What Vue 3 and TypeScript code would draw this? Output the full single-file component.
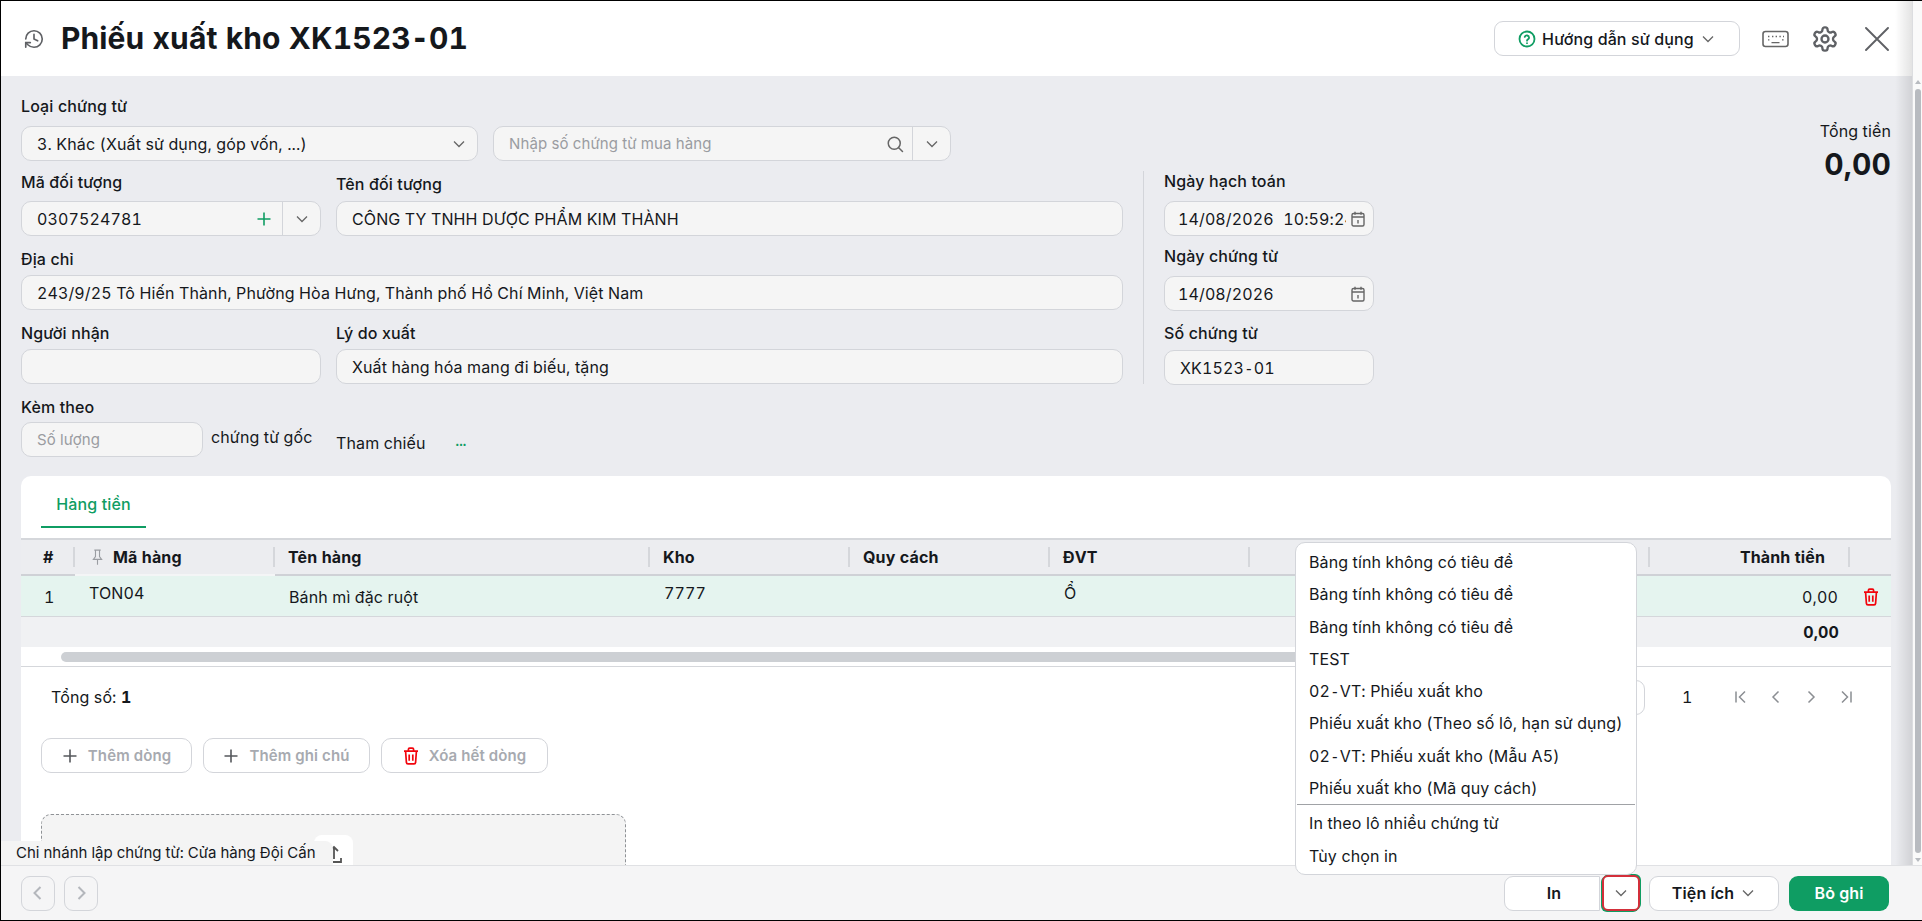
<script setup lang="ts">
interface Column {
  title: string
  align?: 'right'
}

const columns: Column[] = [
  { title: '#' },
  { title: 'Mã hàng' },
  { title: 'Tên hàng' },
  { title: 'Kho' },
  { title: 'Quy cách' },
  { title: 'ĐVT' },
  { title: '' },
  { title: 'Thành tiền', align: 'right' },
  { title: '' },
]

const printTemplates = [
  'Bảng tính không có tiêu đề',
  'Bảng tính không có tiêu đề',
  'Bảng tính không có tiêu đề',
  'TEST',
  '02-VT: Phiếu xuất kho',
  'Phiếu xuất kho (Theo số lô, hạn sử dụng)',
  '02-VT: Phiếu xuất kho (Mẫu A5)',
  'Phiếu xuất kho (Mã quy cách)',
]
const printOptions = ['In theo lô nhiều chứng từ', 'Tùy chọn in']
</script>

<template>
  <div class="window">
    <div class="top">
      <div class="pane">
        <header class="head">
          <svg class="history" viewBox="0 0 24 24" fill="none" stroke="currentColor" stroke-width="2" stroke-linecap="round" stroke-linejoin="round">
            <path d="M3 12a9 9 0 1 1 9 9 9.75 9.75 0 0 1-6.74-2.74L3 16" />
            <path d="M3 21v-5h5" />
            <path d="M12 7v5l4 2" />
          </svg>
          <h1>Phiếu xuất kho XK1523<span class="hy">-</span>01</h1>
          <button class="guide">
            <svg class="guide-q" viewBox="0 0 24 24" fill="none" stroke="#0f9d63" stroke-width="2.4" stroke-linecap="round">
              <circle cx="12" cy="12" r="10" />
              <path d="M9 9.2a3 3 0 0 1 5.8 1c0 2-2.8 2.4-2.8 4" />
              <path d="M12 17.6h.01" />
            </svg>
            Hướng dẫn sử dụng
            <svg class="chev" viewBox="0 0 16 16"><path d="M3 5.5l5 5 5-5" /></svg>
          </button>
          <svg class="keyboard" viewBox="0 0 27 18" fill="none" stroke="#666" stroke-width="1.6">
            <rect x="1" y="1.5" width="25" height="15" rx="2.5" />
            <path d="M6 6.5h1.4M10 6.5h1.4M13.6 6.5H15M17.4 6.5h1.4M21 6.5h1M6 9.8h1.4M20 9.8h1.6M9.5 12.6h8" stroke-width="1.3" />
          </svg>
          <svg class="gear" viewBox="0 0 24 24" fill="none" stroke="#5f6165" stroke-width="2" stroke-linejoin="round">
            <path d="M12.22 2h-.44a2 2 0 0 0-2 2v.18a2 2 0 0 1-1 1.73l-.43.25a2 2 0 0 1-2 0l-.15-.08a2 2 0 0 0-2.73.73l-.22.38a2 2 0 0 0 .73 2.73l.15.1a2 2 0 0 1 1 1.72v.51a2 2 0 0 1-1 1.74l-.15.09a2 2 0 0 0-.73 2.73l.22.38a2 2 0 0 0 2.73.73l.15-.08a2 2 0 0 1 2 0l.43.25a2 2 0 0 1 1 1.73V20a2 2 0 0 0 2 2h.44a2 2 0 0 0 2-2v-.18a2 2 0 0 1 1-1.73l.43-.25a2 2 0 0 1 2 0l.15.08a2 2 0 0 0 2.73-.73l.22-.39a2 2 0 0 0-.73-2.73l-.15-.08a2 2 0 0 1-1-1.74v-.5a2 2 0 0 1 1-1.74l.15-.09a2 2 0 0 0 .73-2.73l-.22-.38a2 2 0 0 0-2.73-.73l-.15.08a2 2 0 0 1-2 0l-.43-.25a2 2 0 0 1-1-1.73V4a2 2 0 0 0-2-2z" />
            <circle cx="12" cy="12" r="3" />
          </svg>
          <svg class="close" viewBox="0 0 24 24" fill="none" stroke="#5f6165" stroke-width="1.9" stroke-linecap="round">
            <path d="M1 1l22 22M23 1L1 23" />
          </svg>
        </header>

        <div class="body">
          <section class="form">
            <div class="form-main">
              <label class="lbl">Loại chứng từ</label>
              <div class="row row-first">
                <div class="inp w-type">
                  <span class="val">3. Khác (Xuất sử dụng, góp vốn, ...)</span>
                  <svg class="chev" viewBox="0 0 16 16"><path d="M3 5.5l5 5 5-5" /></svg>
                </div>
                <div class="inp w-purchase">
                  <span class="val ph">Nhập số chứng từ mua hàng</span>
                  <svg class="search" viewBox="0 0 24 24" fill="none" stroke="#666" stroke-width="2" stroke-linecap="round">
                    <circle cx="11" cy="11" r="8" />
                    <path d="M17 17l5 5" />
                  </svg>
                  <span class="addon"><svg class="chev" viewBox="0 0 16 16"><path d="M3 5.5l5 5 5-5" /></svg></span>
                </div>
              </div>

              <div class="row row-code">
                <div class="col-code">
                  <label class="lbl">Mã đối tượng</label>
                  <div class="inp mt-9">
                    <span class="val">0307524781</span>
                    <svg class="plus" viewBox="0 0 16 16"><path d="M8 1.5v13M1.5 8h13" /></svg>
                    <span class="addon"><svg class="chev" viewBox="0 0 16 16"><path d="M3 5.5l5 5 5-5" /></svg></span>
                  </div>
                </div>
                <div class="col-name">
                  <label class="lbl lbl-low">Tên đối tượng</label>
                  <div class="inp mt-9"><span class="val">CÔNG TY TNHH DƯỢC PHẨM KIM THÀNH</span></div>
                </div>
              </div>

              <label class="lbl mt-13">Địa chỉ</label>
              <div class="inp mt-6"><span class="val">243/9/25 Tô Hiến Thành, Phường Hòa Hưng, Thành phố Hồ Chí Minh, Việt Nam</span></div>

              <div class="row mt-13">
                <div class="col-code">
                  <label class="lbl">Người nhận</label>
                  <div class="inp mt-6"></div>
                </div>
                <div class="col-name">
                  <label class="lbl">Lý do xuất</label>
                  <div class="inp mt-6"><span class="val">Xuất hàng hóa mang đi biếu, tặng</span></div>
                </div>
              </div>

              <label class="lbl mt-13">Kèm theo</label>
              <div class="row attach">
                <div class="inp w-count"><span class="val ph">Số lượng</span></div>
                <span class="attach-text">chứng từ gốc</span>
                <span class="refs">Tham chiếu</span>
                <span class="dots">...</span>
              </div>
            </div>

            <div class="form-dates">
              <label class="lbl">Ngày hạch toán</label>
              <div class="inp date mt-10">
                <span class="val clip">14/08/2026 10:59:24</span>
                <svg class="cal" viewBox="0 0 14 16" fill="none" stroke="#666" stroke-width="1.4">
                  <rect x="1" y="2.5" width="12" height="12.5" rx="1.5" />
                  <path d="M1 6h12M4 .8v3M10 .8v3M7 9v3.5" />
                </svg>
              </div>
              <label class="lbl mt-10">Ngày chứng từ</label>
              <div class="inp date mt-10">
                <span class="val clip">14/08/2026</span>
                <svg class="cal" viewBox="0 0 14 16" fill="none" stroke="#666" stroke-width="1.4">
                  <rect x="1" y="2.5" width="12" height="12.5" rx="1.5" />
                  <path d="M1 6h12M4 .8v3M10 .8v3M7 9v3.5" />
                </svg>
              </div>
              <label class="lbl mt-12">Số chứng từ</label>
              <div class="inp date doc-no mt-7"><span class="val">XK1523<span class="hy">-</span>01</span></div>
            </div>

            <div class="form-total">
              <div class="total-label">Tổng tiền</div>
              <div class="total-value">0,00</div>
            </div>
          </section>

          <section class="card">
            <div class="tabs"><span class="tab">Hàng tiền</span></div>

            <div class="thead">
              <div v-for="(c, i) in columns" :key="i" class="th" :class="{ 'th-right': c.align === 'right', 'th-sticky': i === 1, 'th-num': i === 0 }">
                <svg v-if="i === 1" class="pin" viewBox="0 0 12 18" fill="none" stroke="#9a9da2" stroke-width="1.2">
                  <path d="M2.5 1h7M3.8 1v7L1.5 11h9L8.2 8V1M6 11v6" />
                </svg>
                <span class="th-text">{{ c.title }}</span>
                <span v-if="i < 8" class="sep"></span>
              </div>
            </div>

            <div class="trow">
              <div class="td td-num">1</div>
              <div class="td td-raise">TON04</div>
              <div class="td">Bánh mì đặc ruột</div>
              <div class="td td-raise">7777</div>
              <div class="td"></div>
              <div class="td td-raise">Ổ</div>
              <div class="td"></div>
              <div class="td td-right">0,00</div>
              <div class="td td-del">
                <svg class="trash" viewBox="0 0 16 18" fill="none" stroke="#f2050d" stroke-width="1.7">
                  <path d="M1 4.2h14M5.4 4V2.4a1.2 1.2 0 0 1 1.2-1.2h2.8a1.2 1.2 0 0 1 1.2 1.2V4" />
                  <path d="M2.6 4.4l.8 11a1.6 1.6 0 0 0 1.6 1.5h6a1.6 1.6 0 0 0 1.6-1.5l.8-11M6.2 7.4v6.4M9.8 7.4v6.4" />
                </svg>
              </div>
            </div>

            <div class="tsum">
              <div class="sum-value">0,00</div>
            </div>

            <div class="hscroll"><div class="hthumb"></div></div>

            <div class="pager">
              <span class="count">Tổng số: <b>1</b></span>
              <span class="page-size"></span>
              <span class="page-no">1</span>
              <svg class="pg" viewBox="0 0 16 16"><path d="M3 2.5v11M12 2.5L6.5 8l5.5 5.5" /></svg>
              <svg class="pg" viewBox="0 0 16 16"><path d="M10.5 2.5L5 8l5.5 5.5" /></svg>
              <svg class="pg" viewBox="0 0 16 16"><path d="M5.5 2.5L11 8l-5.5 5.5" /></svg>
              <svg class="pg" viewBox="0 0 16 16"><path d="M13 2.5v11M4 2.5L9.5 8 4 13.5" /></svg>
            </div>

            <div class="row-actions">
              <button class="ghost w-a"><svg class="add" viewBox="0 0 16 16"><path d="M8 1.5v13M1.5 8h13" /></svg>Thêm dòng</button>
              <button class="ghost w-b"><svg class="add" viewBox="0 0 16 16"><path d="M8 1.5v13M1.5 8h13" /></svg>Thêm ghi chú</button>
              <button class="ghost w-c">
                <svg class="trash" viewBox="0 0 16 18" fill="none" stroke="#f2050d" stroke-width="1.7">
                  <path d="M1 4.2h14M5.4 4V2.4a1.2 1.2 0 0 1 1.2-1.2h2.8a1.2 1.2 0 0 1 1.2 1.2V4" />
                  <path d="M2.6 4.4l.8 11a1.6 1.6 0 0 0 1.6 1.5h6a1.6 1.6 0 0 0 1.6-1.5l.8-11M6.2 7.4v6.4M9.8 7.4v6.4" />
                </svg>
                Xóa hết dòng
              </button>
            </div>

            <div class="drop">
              <button class="upload">
                <svg viewBox="0 0 20 20" fill="none" stroke="#555" stroke-width="1.8">
                  <path d="M10 15V3M6 7l4-4 4 4M3 14v4h14v-4" />
                </svg>
              </button>
            </div>
          </section>
        </div>
      </div>

      <aside class="vscroll">
        <span class="arrow-up"></span>
        <span class="vthumb"></span>
        <span class="arrow-down"></span>
      </aside>
    </div>

    <footer class="foot">
      <button class="nav"><svg class="nav-ic" viewBox="0 0 16 16"><path d="M10.5 2L4.5 8l6 6" /></svg></button>
      <button class="nav"><svg class="nav-ic" viewBox="0 0 16 16"><path d="M5.5 2l6 6-6 6" /></svg></button>
      <span class="foot-gap"></span>
      <button class="btn btn-in">In</button>
      <button class="btn btn-caret"><svg class="chev" viewBox="0 0 16 16"><path d="M3 5.5l5 5 5-5" /></svg></button>
      <button class="btn btn-util">Tiện ích <svg class="chev" viewBox="0 0 16 16"><path d="M3 5.5l5 5 5-5" /></svg></button>
      <button class="btn btn-save">Bỏ ghi</button>
    </footer>

    <div class="branch">Chi nhánh lập chứng từ: Cửa hàng Đội Cấn</div>

    <div class="menu">
      <div v-for="(t, i) in printTemplates" :key="i" class="menu-item">
        <template v-for="(part, j) in t.split('-')" :key="j"><span v-if="j" class="hy">-</span>{{ part }}</template>
      </div>
      <div class="menu-line"></div>
      <div v-for="t in printOptions" :key="t" class="menu-item">{{ t }}</div>
    </div>
  </div>
</template>

<style scoped>
.window {
  position: relative;
  box-sizing: border-box;
  width: 1922px;
  height: 921px;
  display: flex;
  flex-direction: column;
  overflow: hidden;
  border-top: 1px solid #000;
  border-left: 1px solid #000;
  border-bottom: 1px solid #000;
  background: #fff;
  color: #15181c;
  font-family: Inter, "Noto Sans", sans-serif;
  font-size: 16px;
  letter-spacing: 0.12px;
  font-variant-numeric: tabular-nums;
}
button {
  font-family: inherit;
  font-size: 16px;
  letter-spacing: inherit;
  color: inherit;
  background: #fff;
}
svg {
  flex: none;
  display: block;
}
.hy {
  font-family: "DejaVu Sans Mono", monospace;
}
.chev {
  width: 16px;
  height: 16px;
  fill: none;
  stroke: #666;
  stroke-width: 1.3;
}
.top {
  flex: 1;
  min-height: 0;
  display: flex;
}
.pane {
  position: relative;
  flex: 1;
  min-width: 0;
  display: flex;
  flex-direction: column;
}
.pane::after {
  content: "";
  position: absolute;
  top: 0;
  right: 0;
  bottom: 0;
  width: 17px;
  background: linear-gradient(to right, rgba(0, 0, 0, 0), rgba(0, 0, 0, 0.11));
}

/* header */
.head {
  flex: none;
  height: 75px;
  display: flex;
  align-items: center;
  padding-left: 22px;
  padding-right: 23px;
}
.history {
  width: 22px;
  height: 22px;
  color: #5f6165;
  stroke-width: 1.8;
}
h1 {
  margin: 0 0 0 16px;
  font-size: 30px;
  font-weight: 700;
  line-height: 36px;
}
.guide {
  margin-left: auto;
  width: 246px;
  height: 35px;
  display: flex;
  align-items: center;
  justify-content: center;
  gap: 6px;
  border: 1px solid #d3d5da;
  border-radius: 9px;
  font-weight: 500;
}
.guide-q {
  width: 18px;
  height: 18px;
}
.keyboard {
  margin-left: 22px;
  width: 27px;
  height: 18px;
}
.gear {
  margin-left: 22px;
  width: 28px;
  height: 28px;
}
.close {
  margin-left: 26px;
  width: 24px;
  height: 24px;
}

/* form */
.body {
  flex: 1;
  min-height: 0;
  display: flex;
  flex-direction: column;
  background: #ebecf0;
  overflow: hidden;
}
.form {
  flex: none;
  display: flex;
  height: 400px;
  box-sizing: border-box;
  padding: 20px 21px 0 20px;
}
.form-main {
  width: 1102px;
  flex: none;
  display: flex;
  flex-direction: column;
}
.lbl {
  display: block;
  height: 20px;
  line-height: 20px;
  font-weight: 500;
}
.lbl-low {
  position: relative;
  top: 2px;
}
.row {
  display: flex;
}
.row-first {
  gap: 15px;
  margin-top: 10px;
}
.row-code {
  margin-top: 11px;
}
.col-code {
  width: 300px;
  flex: none;
}
.col-name {
  margin-left: 15px;
  flex: 1;
  min-width: 0;
}
.inp {
  box-sizing: border-box;
  height: 35px;
  display: flex;
  align-items: center;
  padding-left: 15px;
  border: 1px solid #d3d5da;
  border-radius: 10px;
  background: #f5f5f5;
}
.val {
  flex: 1;
  min-width: 0;
  white-space: nowrap;
}
.ph {
  color: #9a9ca1;
  font-size: 15px;
}
.w-type {
  width: 457px;
  padding-right: 10px;
}
.w-purchase {
  width: 458px;
  padding-right: 0;
}
.search {
  width: 18px;
  height: 18px;
  margin-right: 8px;
}
.addon {
  width: 38px;
  height: 100%;
  flex: none;
  display: flex;
  align-items: center;
  justify-content: center;
  border-left: 1px solid #d3d5da;
  box-sizing: border-box;
}
.plus {
  width: 16px;
  height: 16px;
  margin-right: 10px;
  fill: none;
  stroke: #0f9d63;
  stroke-width: 1.6;
}
.mt-6 { margin-top: 6px; }
.mt-7 { margin-top: 7px; }
.mt-9 { margin-top: 9px; }
.mt-10 { margin-top: 10px; }
.mt-12 { margin-top: 12px; }
.mt-13 { margin-top: 13px; }
.attach {
  margin-top: 5px;
}
.w-count {
  width: 182px;
  flex: none;
}
.attach-text {
  margin-left: 8px;
  width: 125px;
  padding-top: 5px;
  line-height: 20px;
  white-space: nowrap;
}
.refs {
  padding-top: 11px;
  line-height: 20px;
}
.dots {
  margin-left: 30px;
  padding-top: 9px;
  line-height: 20px;
  color: #0f9d63;
  font-weight: 700;
  font-size: 13px;
}
.form-dates {
  flex: none;
  box-sizing: border-box;
  margin: 75px 0 92px 20px;
  padding-left: 20px;
  width: 251px;
  border-left: 1px solid #d3d5da;
}
.date {
  width: 210px;
  padding-left: 13px;
  padding-right: 8px;
}
.doc-no {
  padding-left: 15px;
}
.clip {
  overflow: hidden;
  margin-right: 5px;
  word-spacing: 5px;
}
.cal {
  width: 14px;
  height: 16px;
}
.form-total {
  flex: 1;
  text-align: right;
  padding-top: 25px;
}
.total-label {
  line-height: 20px;
}
.total-value {
  margin-top: 3px;
  font-size: 30px;
  font-weight: 700;
  line-height: 40px;
}

/* card */
.card {
  flex: 1;
  min-height: 0;
  margin: 0 21px 0 20px;
  background: #fff;
  border-radius: 10px 10px 0 0;
  overflow: hidden;
}
.tabs {
  height: 62px;
  box-sizing: border-box;
  padding-left: 20px;
}
.tab {
  display: inline-block;
  width: 105px;
  height: 52px;
  box-sizing: border-box;
  text-align: center;
  line-height: 56px;
  color: #0f9d63;
  font-weight: 500;
  border-bottom: 2px solid #0f9d63;
}
.thead,
.trow {
  display: grid;
  grid-template-columns: 54px 200px 375px 200px 200px 200px 400px 200px 41px;
}
.thead {
  height: 38px;
  box-sizing: border-box;
  background: #ecedf0;
  border-top: 2px solid #d5d7db;
  border-bottom: 2px solid #cfd1d6;
}
.th {
  position: relative;
  display: flex;
  align-items: center;
  padding-left: 13px;
  font-weight: 700;
  min-width: 0;
}
.th-num {
  padding-left: 22px;
}
.th-text {
  flex: 1;
}
.th-right .th-text {
  text-align: right;
  margin-right: 23px;
}
.th-sticky {
  padding-left: 17px;
  border-bottom: 2px solid #f4f5f6;
  margin-bottom: -2px;
}
.pin {
  width: 11px;
  height: 17px;
  margin-right: 10px;
}
.sep {
  width: 2px;
  height: 20px;
  flex: none;
  background: #d5d7db;
}
.trow {
  height: 41px;
  box-sizing: border-box;
  background: #e5f4ef;
  border-bottom: 1px solid #d5d7db;
}
.td {
  display: flex;
  align-items: center;
  padding-left: 14px;
  min-width: 0;
  white-space: nowrap;
  padding-top: 1px;
}
.td-num {
  padding-left: 23px;
  padding-top: 2px;
}
.td-raise {
  padding-top: 0;
  padding-bottom: 6px;
}
.td-right {
  justify-content: flex-end;
  padding-right: 12px;
}
.td-del {
  padding-left: 13px;
}
.trash {
  width: 16px;
  height: 18px;
}
.tsum {
  height: 30px;
  background: #f0f1f3;
  display: flex;
  justify-content: flex-end;
  align-items: center;
  padding-right: 52px;
  font-weight: 700;
}
.hscroll {
  height: 20px;
  box-sizing: border-box;
  padding: 5px 0 0 40px;
  border-bottom: 1px solid #d5d7db;
}
.hthumb {
  width: 1260px;
  height: 10px;
  border-radius: 5px;
  background: #cdd0d4;
}
.pager {
  height: 60px;
  display: flex;
  align-items: center;
  padding-left: 30px;
}
.count {
  flex: 1;
}
.page-size {
  box-sizing: border-box;
  width: 60px;
  height: 35px;
  border: 1px solid #d3d5da;
  border-radius: 9px;
}
.page-no {
  width: 20px;
  margin-left: 37px;
  margin-right: 31px;
}
.pg {
  width: 16px;
  height: 16px;
  margin-right: 19px;
  fill: none;
  stroke: #8b8e93;
  stroke-width: 1.5;
}
.pg:last-child {
  margin-right: 37px;
}
.row-actions {
  display: flex;
  gap: 11px;
  margin-top: 11px;
  padding-left: 20px;
}
.ghost {
  height: 35px;
  display: flex;
  align-items: center;
  justify-content: center;
  gap: 10px;
  border: 1px solid #d3d5da;
  border-radius: 10px;
  color: #a7aab0;
  font-size: 15px;
  font-weight: 600;
}
.w-a { width: 151px; }
.w-b { width: 167px; }
.w-c { width: 167px; }
.add {
  width: 16px;
  height: 16px;
  fill: none;
  stroke: #55585c;
  stroke-width: 1.6;
}
.drop {
  margin: 41px 0 0 20px;
  width: 585px;
  height: 200px;
  box-sizing: border-box;
  padding-top: 20px;
  display: flex;
  justify-content: center;
  border: 1px dashed #8f9296;
  border-radius: 10px;
  background: #f4f4f4;
}
.upload {
  width: 39px;
  height: 39px;
  border: 0;
  border-radius: 8px;
  padding: 9px 0 0 0;
  display: flex;
  justify-content: center;
}
.upload svg {
  width: 20px;
  height: 20px;
}

/* page scrollbar */
.vscroll {
  width: 10px;
  flex: none;
  display: flex;
  flex-direction: column;
  align-items: center;
  background: #fafafa;
  padding-top: 76px;
  box-sizing: border-box;
  border-left: 1px solid #dcdde0;
}
.arrow-up {
  width: 0;
  height: 0;
  border-left: 3px solid transparent;
  border-right: 3px solid transparent;
  border-bottom: 4px solid #b8bbc0;
  margin-top: 3px;
}
.vthumb {
  flex: 1;
  width: 6px;
  margin: 5px 0;
  border-radius: 3px;
  background: #b8bbc0;
}
.arrow-down {
  width: 0;
  height: 0;
  border-left: 3px solid transparent;
  border-right: 3px solid transparent;
  border-top: 4px solid #b8bbc0;
  margin-bottom: 3px;
}

/* footer */
.foot {
  position: relative;
  flex: none;
  height: 55px;
  box-sizing: border-box;
  display: flex;
  align-items: center;
  padding: 0 33px 0 20px;
  gap: 9px;
  background: #f5f5f6;
  border-top: 1px solid #e0e1e4;
}
.nav {
  box-sizing: border-box;
  width: 34px;
  height: 35px;
  padding: 0;
  display: flex;
  align-items: center;
  justify-content: center;
  border: 1px solid #d3d5da;
  border-radius: 9px;
  background: #f5f5f6;
}
.nav-ic {
  width: 16px;
  height: 16px;
  fill: none;
  stroke: #b4b7bc;
  stroke-width: 2;
}
.foot-gap {
  flex: 1;
}
.btn {
  box-sizing: border-box;
  height: 35px;
  display: flex;
  align-items: center;
  justify-content: center;
  border: 1px solid #d3d5da;
  border-radius: 9px;
  font-weight: 600;
  padding: 0;
}
.btn-in {
  width: 96px;
  margin-right: -7px;
  padding-left: 4px;
  border-radius: 9px 0 0 9px;
}
.btn-caret {
  width: 38px;
  height: 36px;
  border: 2px solid #d32f3a;
  border-radius: 6px;
  box-shadow: -1px 1px 0 #0f9d63, 1px -1px 0 #0f9d63;
}
.btn-util {
  width: 130px;
  gap: 6px;
}
.btn-save {
  width: 100px;
  margin-left: 1px;
  border: 0;
  background: #0f9d63;
  color: #fff;
}

/* overlays */
.branch {
  position: absolute;
  left: 0;
  top: 840px;
  height: 24px;
  width: 332px;
  box-sizing: border-box;
  padding-left: 15px;
  line-height: 24px;
  font-size: 15px;
  letter-spacing: 0;
  background: #f4f4f4;
  border-radius: 0 8px 0 0;
  white-space: nowrap;
}
.menu {
  position: absolute;
  left: 1294px;
  top: 541px;
  width: 342px;
  height: 333px;
  box-sizing: border-box;
  padding-top: 3px;
  background: #fff;
  border: 1px solid #d3d5da;
  border-radius: 10px;
}
.menu-item {
  height: 32.3px;
  line-height: 32.3px;
  padding-left: 13px;
  white-space: nowrap;
}
.menu-line {
  height: 1px;
  margin: 0 1px 2px;
  background: #a0a2a6;
}
</style>

<style>
html,
body {
  margin: 0;
  overflow: hidden;
}
</style>
